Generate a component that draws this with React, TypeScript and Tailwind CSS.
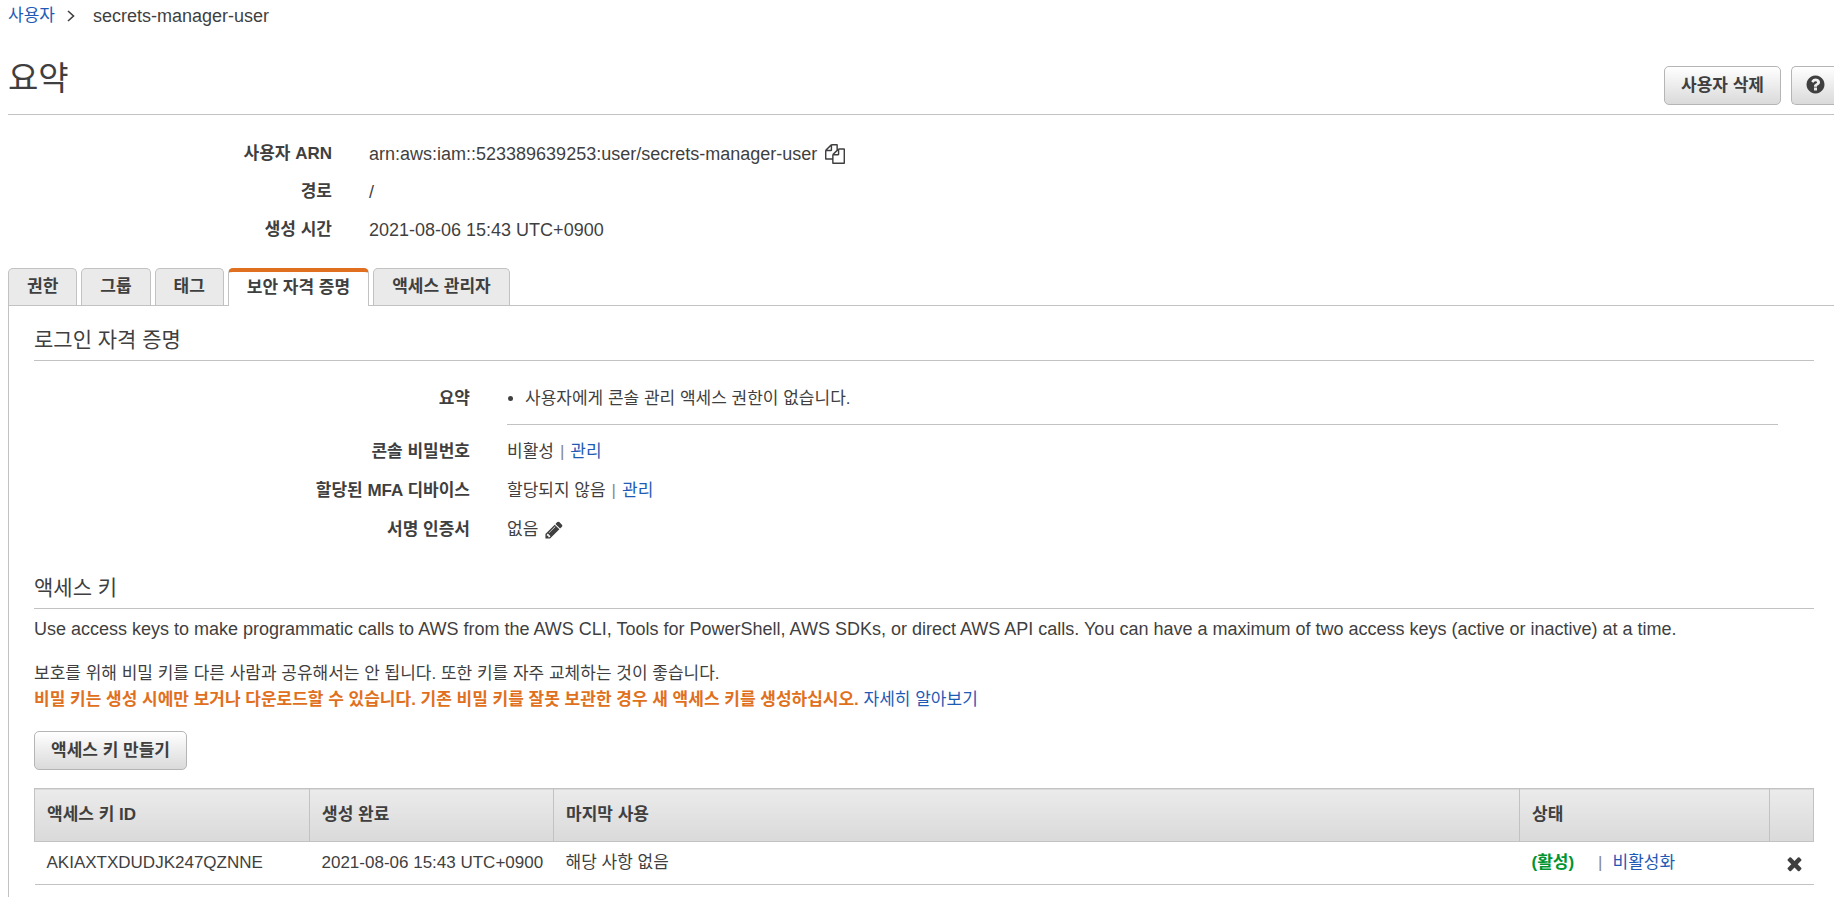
import type { ReactNode } from "react";

interface AccessKey {
  id: string;
  created: string;
  lastUsed: string;
}

const TABS = ["권한", "그룹", "태그", "보안 자격 증명", "액세스 관리자"];
const ACTIVE_TAB = "보안 자격 증명";

const ACCESS_KEYS: AccessKey[] = [
  {
    id: "AKIAXTXDUDJK247QZNNE",
    created: "2021-08-06 15:43 UTC+0900",
    lastUsed: "해당 사항 없음",
  },
];

const ICONS = {
  copy: "M1696 384q40 0 68 28t28 68v1216q0 40-28 68t-68 28h-960q-40 0-68-28t-28-68v-288h-544q-40 0-68-28t-28-68v-672q0-40 20-88t48-76l408-408q28-28 76-48t88-20h416q40 0 68 28t28 68v328q68-40 128-40h416zm-544 213l-299 299h299v-299zm-640-384l-299 299h299v-299zm196 647l316-316v-416h-384v416q0 40-28 68t-68 28h-416v640h512v-256q0-40 20-88t48-76zm956 804v-1152h-384v416q0 40-28 68t-68 28h-416v640h896z",
  pencil:
    "M491 1536l91-91-235-235-91 91v107h128v128h107zm523-928q0-22-22-22-10 0-17 7l-542 542q-7 7-7 17 0 22 22 22 10 0 17-7l542-542q7-7 7-17zm-54-192l416 416-832 832h-416v-416zm683 96q0 53-37 90l-166 166-416-416 166-165q36-38 90-38 53 0 91 38l235 234q37 39 37 91z",
  question:
    "M1024 1376v-192q0-14-9-23t-23-9h-192q-14 0-23 9t-9 23v192q0 14 9 23t23 9h192q14 0 23-9t9-23zm256-672q0-88-55.5-163t-138.5-116-170-41q-243 0-371 213-15 24 8 42l132 100q7 6 19 6 16 0 25-12 53-68 86-92 34-24 86-24 48 0 85.5 26t37.5 59q0 38-20 61t-68 45q-63 28-115.5 86.5t-52.5 125.5v36q0 14 9 23t23 9h192q14 0 23-9t9-23q0-19 21.5-49.5t54.5-49.5q32-18 49-28.5t46-35 44.5-48 28-60.5 12.5-81zm384 192q0 209-103 385.5t-279.5 279.5-385.5 103-385.5-103-279.5-279.5-103-385.5 103-385.5 279.5-279.5 385.5-103 385.5 103 279.5 279.5 103 385.5z",
  times:
    "M1490 1322q0 40-28 68l-136 136q-28 28-68 28t-68-28l-294-294-294 294q-28 28-68 28t-68-28l-136-136q-28-28-28-68t28-68l294-294-294-294q-28-28-28-68t28-68l136-136q28-28 68-28t68 28l294 294 294-294q28-28 68-28t68 28l136 136q28 28 28 68t-28 68l-294 294 294 294q28 28 28 68z",
};

function Icon({
  name,
  className,
}: {
  name: keyof typeof ICONS;
  className: string;
}) {
  return (
    <svg
      viewBox="0 0 1792 1792"
      fill="currentColor"
      aria-hidden="true"
      className={className}
    >
      <path d={ICONS[name]} />
    </svg>
  );
}

function LinkText({ children }: { children: ReactNode }) {
  return (
    <a href="#" className="text-[#1f5bb5] hover:underline">
      {children}
    </a>
  );
}

function Divider() {
  return <span className="mx-[6px] text-[#888888]">|</span>;
}

function SectionTitle({ children }: { children: ReactNode }) {
  return (
    <h2 className="border-b border-[#c2c2c2] pb-2 text-[21px] leading-6">
      {children}
    </h2>
  );
}

export default function App() {
  return (
    <div className="min-h-screen overflow-x-hidden bg-white pl-2 font-['Liberation_Sans','Noto_Sans_CJK_KR',sans-serif] text-[17px] leading-6 text-[#3f3f3f]">
      <nav aria-label="breadcrumb" className="flex items-center pt-1">
        <LinkText>사용자</LinkText>
        <svg
          viewBox="0 0 8 12"
          fill="none"
          stroke="currentColor"
          strokeWidth="1.6"
          aria-hidden="true"
          className="mr-[18px] ml-3 h-3 w-2"
        >
          <path d="M1 1l5.5 5L1 11" />
        </svg>
        <span className="text-[18px]">secrets-manager-user</span>
      </nav>

      <header className="mt-[33px] flex h-[54px] items-start justify-between border-b border-[#c2c2c2]">
        <h1 className="text-[33px] leading-9">요약</h1>
        <div className="flex gap-[10px] pt-[5px]">
          <button
            type="button"
            className="h-[39px] rounded-[5px] border border-[#b5b5b5] bg-linear-to-b from-white to-[#dadada] px-4 font-bold"
          >
            사용자 삭제
          </button>
          <button
            type="button"
            aria-label="도움말"
            className="h-[39px] rounded-l-[5px] border border-r-0 border-[#b5b5b5] bg-linear-to-b from-white to-[#dadada] pr-2 pb-[2px] pl-[13px]"
          >
            <Icon name="question" className="h-[21px] w-[21px]" />
          </button>
        </div>
      </header>

      <dl className="mt-[27px] grid grid-cols-[324px_1fr] gap-x-[37px] gap-y-[14px]">
        <dt className="text-right font-bold">사용자 ARN</dt>
        <dd className="flex items-center gap-2 text-[18px]">
          arn:aws:iam::523389639253:user/secrets-manager-user
          <button type="button" aria-label="ARN 복사">
            <Icon name="copy" className="h-5 w-5" />
          </button>
        </dd>
        <dt className="text-right font-bold">경로</dt>
        <dd className="text-[18px]">/</dd>
        <dt className="text-right font-bold">생성 시간</dt>
        <dd className="text-[18px]">2021-08-06 15:43 UTC+0900</dd>
      </dl>

      <div role="tablist" className="mt-[26px] flex h-[37px] gap-1">
        {TABS.map((tab) => {
          const isActive = tab === ACTIVE_TAB;

          return (
            <button
              key={tab}
              type="button"
              role="tab"
              aria-selected={isActive}
              className={`rounded-t-[5px] border px-[18px] font-bold ${
                isActive
                  ? "z-10 h-[38px] border-t-4 border-b-0 border-[#c2c2c2] border-t-[#e07020] bg-white pb-[3px]"
                  : "h-[37px] border-b-0 border-[#c2c2c2] bg-[#eaeaea]"
              }`}
            >
              {tab}
            </button>
          );
        })}
      </div>

      <main className="border-t border-l border-[#c2c2c2] pt-[22px] pr-5 pb-3 pl-[25px]">
        <SectionTitle>로그인 자격 증명</SectionTitle>
        <dl className="mt-[26px] grid grid-cols-[436px_1fr] gap-x-[37px] gap-y-[15px] pr-9">
          <dt className="text-right font-bold">요약</dt>
          <dd className="border-b border-[#c2c2c2] pb-[13px]">
            <ul className="list-disc pl-[18px]">
              <li>사용자에게 콘솔 관리 액세스 권한이 없습니다.</li>
            </ul>
          </dd>
          <dt className="text-right font-bold">콘솔 비밀번호</dt>
          <dd>
            비활성
            <Divider />
            <LinkText>관리</LinkText>
          </dd>
          <dt className="text-right font-bold">할당된 MFA 디바이스</dt>
          <dd>
            할당되지 않음
            <Divider />
            <LinkText>관리</LinkText>
          </dd>
          <dt className="text-right font-bold">서명 인증서</dt>
          <dd className="flex items-center gap-[6px]">
            없음
            <button type="button" aria-label="서명 인증서 편집">
              <Icon name="pencil" className="h-5 w-5" />
            </button>
          </dd>
        </dl>

        <div className="mt-[34px]">
          <SectionTitle>액세스 키</SectionTitle>
        </div>
        <p className="mt-2 text-[18px]">
          Use access keys to make programmatic calls to AWS from the AWS CLI,
          Tools for PowerShell, AWS SDKs, or direct AWS API calls. You can have
          a maximum of two access keys (active or inactive) at a time.
        </p>
        <p className="mt-5 leading-[26px]">
          보호를 위해 비밀 키를 다른 사람과 공유해서는 안 됩니다. 또한 키를 자주
          교체하는 것이 좋습니다.
          <br />
          <strong className="text-[#e07020]">
            비밀 키는 생성 시에만 보거나 다운로드할 수 있습니다. 기존 비밀 키를
            잘못 보관한 경우 새 액세스 키를 생성하십시오.
          </strong>{" "}
          <LinkText>자세히 알아보기</LinkText>
        </p>
        <button
          type="button"
          className="mt-[18px] h-[39px] rounded-[5px] border border-[#b5b5b5] bg-linear-to-b from-white to-[#dadada] px-4 font-bold"
        >
          액세스 키 만들기
        </button>

        <table className="mt-[18px] w-full table-fixed border-collapse text-left">
          <colgroup>
            <col className="w-[275px]" />
            <col className="w-[244px]" />
            <col />
            <col className="w-[250px]" />
            <col className="w-[44px]" />
          </colgroup>
          <thead>
            <tr className="h-[53px] border border-[#c2c2c2] bg-linear-to-b from-[#ebebeb] to-[#dadada]">
              <th className="border-r border-[#c2c2c2] px-3">액세스 키 ID</th>
              <th className="border-r border-[#c2c2c2] px-3">생성 완료</th>
              <th className="border-r border-[#c2c2c2] px-3">마지막 사용</th>
              <th className="border-r border-[#c2c2c2] px-3">상태</th>
              <th aria-label="삭제" />
            </tr>
          </thead>
          <tbody>
            {ACCESS_KEYS.map((key) => (
              <tr key={key.id} className="h-[43px] border-b border-[#c2c2c2]">
                <td className="px-3">{key.id}</td>
                <td className="pl-3 whitespace-nowrap">{key.created}</td>
                <td className="px-3">{key.lastUsed}</td>
                <td className="px-3 whitespace-nowrap">
                  <strong className="mr-[18px] text-[#009530]">(활성)</strong>
                  <Divider />
                  <span className="pl-1">
                    <LinkText>비활성화</LinkText>
                  </span>
                </td>
                <td className="pl-[14px]">
                  <button
                    type="button"
                    aria-label="액세스 키 삭제"
                    className="flex items-center"
                  >
                    <Icon name="times" className="h-[21px] w-[21px]" />
                  </button>
                </td>
              </tr>
            ))}
          </tbody>
        </table>
      </main>
    </div>
  );
}
